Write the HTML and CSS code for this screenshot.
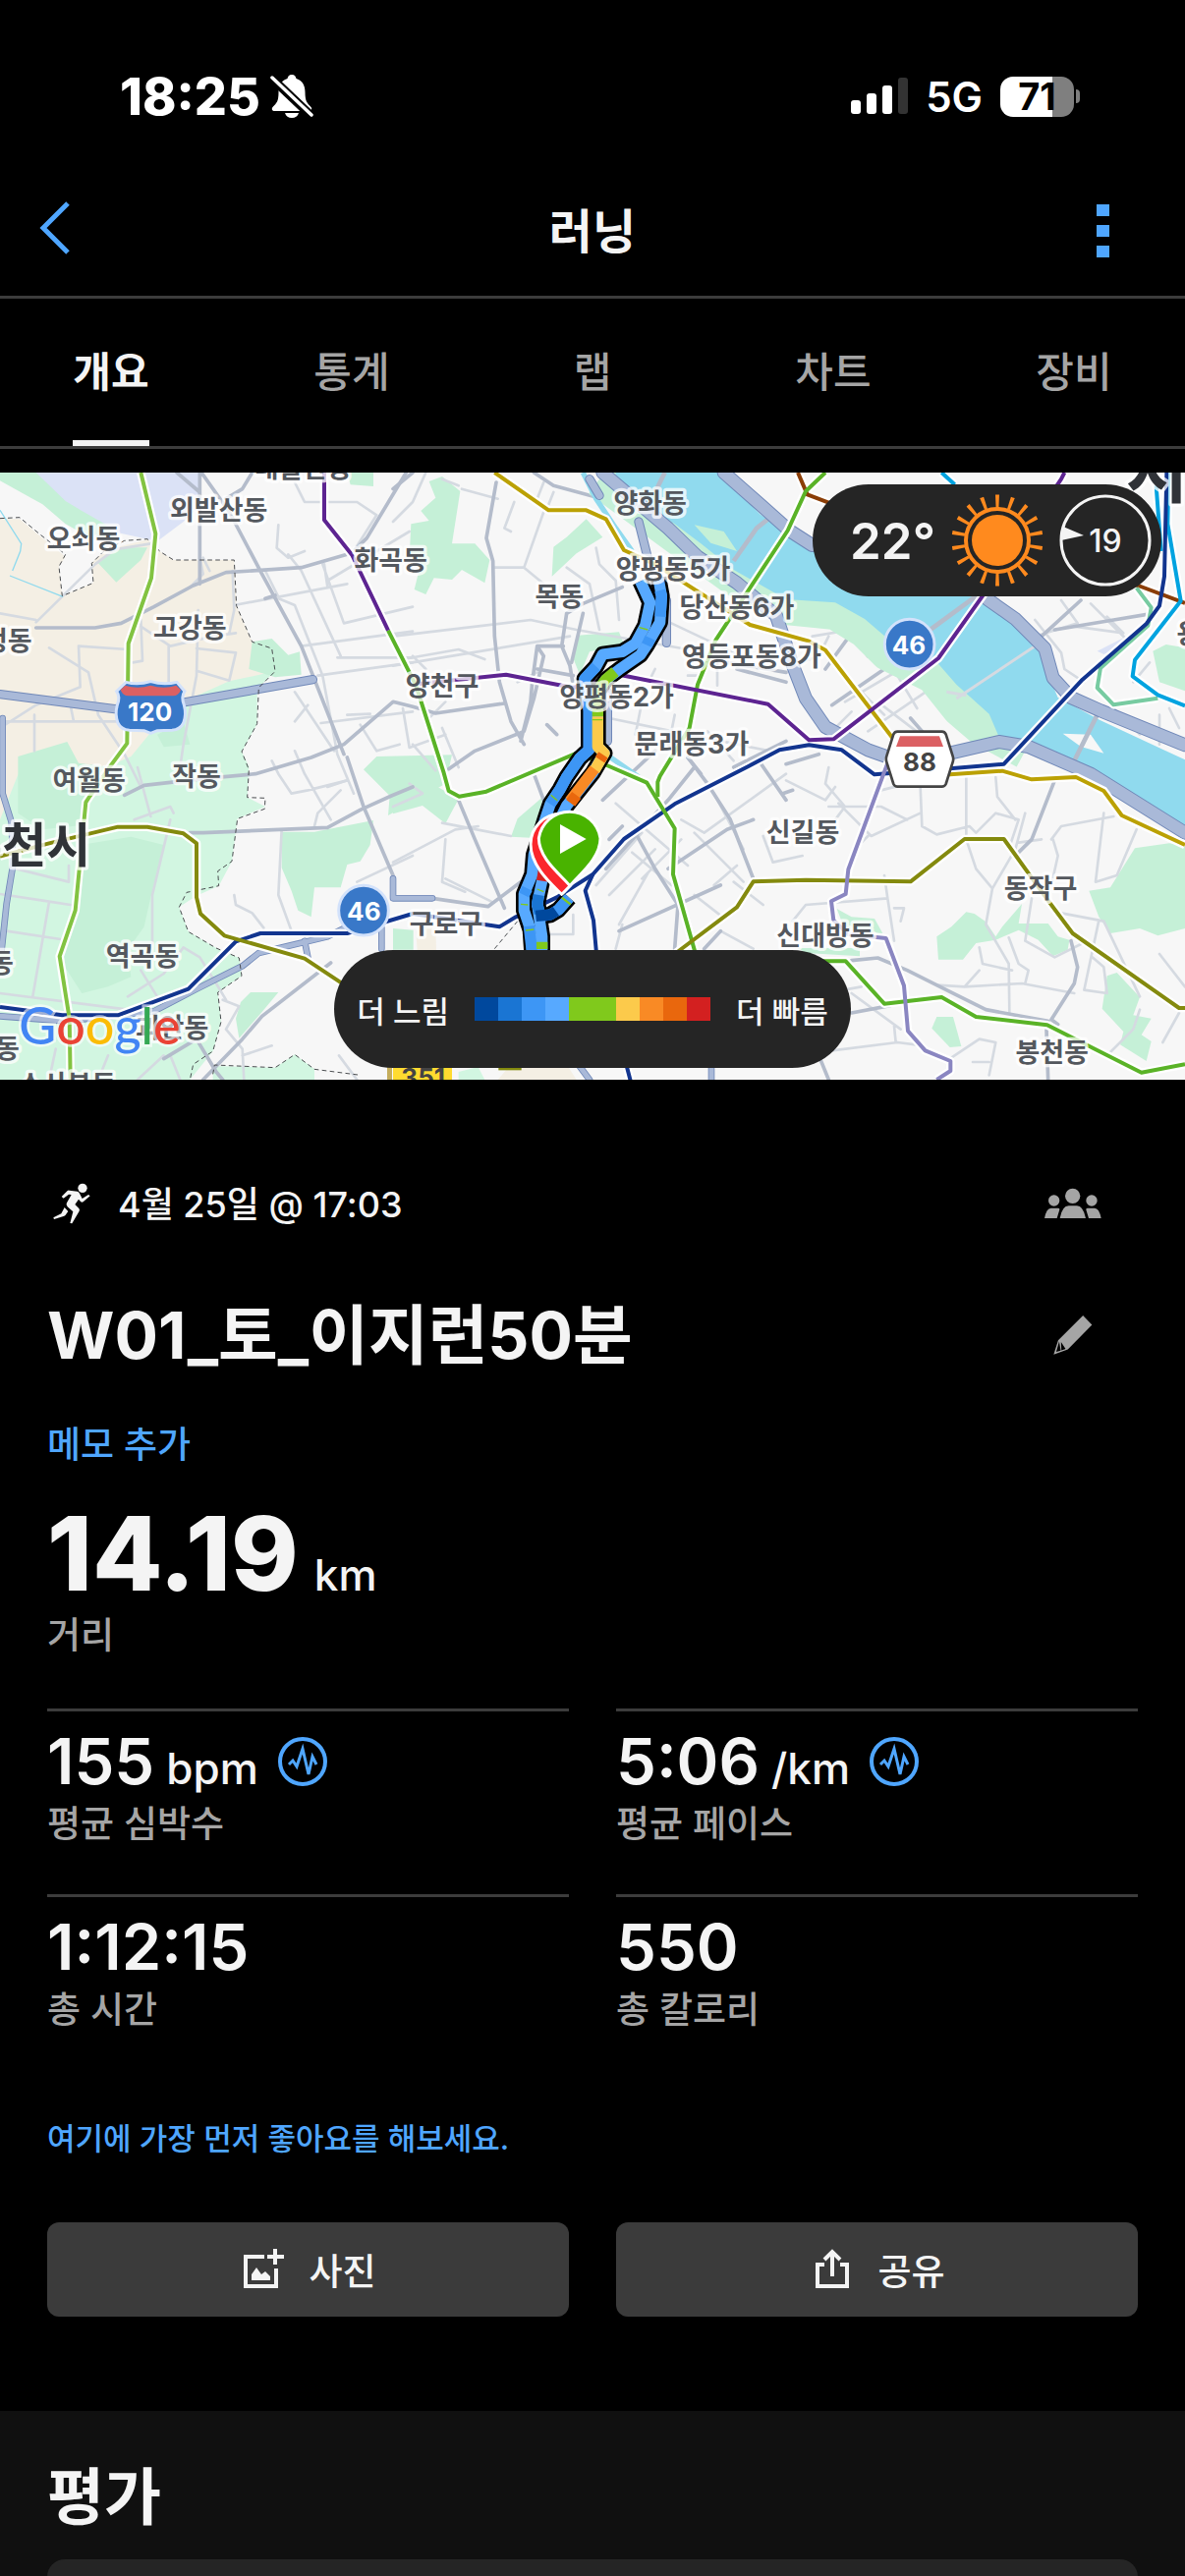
FILE: index.html
```html
<!DOCTYPE html>
<html lang="ko">
<head>
<meta charset="utf-8">
<meta name="viewport" content="width=device-width">
<title>러닝</title>
<link rel="stylesheet" href="styles.css">
</head>
<body>
<div class="status">
  <div class="status-left">
    <span class="clock">18:25</span>
    <svg class="bell" viewBox="0 0 44 46" aria-hidden="true">
      <path fill="#fff" d="M22 1c3 0 4 2 4.500 4 7 2 9 8 9 14 0 9 2 11 6 15 1.500 2 .5 4-2 4H4.500c-2.500 0-3.500-2-2-4 4-4 6-6 6-15 0-6 2-12 9-14C18 3 19 1 22 1zM15 40h14c-1 3.500-3.500 5-7 5s-6-1.500-7-5z"/>
      <path stroke="#000" stroke-width="9" d="M2 5l40 38"/>
      <path stroke="#fff" stroke-width="3.500" stroke-linecap="round" d="M2 4l40 38"/>
    </svg>
  </div>
  <div class="status-right">
    <svg class="signal" viewBox="0 0 58 38" aria-hidden="true">
      <rect x="0" y="23" width="10" height="14" rx="3" fill="#fff"/>
      <rect x="16" y="16" width="10" height="21" rx="3" fill="#fff"/>
      <rect x="32" y="8" width="10" height="29" rx="3" fill="#fff"/>
      <rect x="48" y="0" width="10" height="37" rx="3" fill="#333"/>
    </svg>
    <span class="network">5G</span>
    <span class="battery"><span class="battery-body">71</span><span class="battery-tip"></span></span>
  </div>
</div>

<header class="nav">
  <button class="icon-btn back" aria-label="뒤로">
    <svg width="32" height="54" viewBox="0 0 32 54"><path d="M29 2L4 27l25 25" fill="none" stroke="#4fa6ff" stroke-width="5"/></svg>
  </button>
  <h1 class="nav-title">러닝</h1>
  <button class="icon-btn more" aria-label="더보기">
    <svg width="13" height="54" viewBox="0 0 13 54" fill="#4fa6ff"><path d="M0 0h13v12H0zM0 21h13v12H0zM0 42h13v12H0z"/></svg>
  </button>
</header>

<nav class="tabs">
  <a href="#overview" class="tab active">개요</a>
  <a href="#stats" class="tab">통계</a>
  <a href="#laps" class="tab">랩</a>
  <a href="#charts" class="tab">차트</a>
  <a href="#gear" class="tab">장비</a>
</nav>

<div class="map" id="overview">
<svg class="map-svg" viewBox="0 0 3618 1854" preserveAspectRatio="xMidYMid slice">
  <defs>
    <path id="seohae" d="M430 0L475 187 462 322 392 522 388 827 340 892 275 987 262 1007 230 1337 182 1477 212 1667 215 1854"/>
    <path id="l5a" d="M990 0V145L1075 252 1185 482"/>
    <path id="l5b" d="M1280 645L1545 617 1750 657 1890 617 2345 707 2470 817 2545 814 2865 567 3000 377 3240 20 3250 0"/>
    <path id="l2a" d="M1185 482L1270 650 1355 917 1370 972 1402 989 1485 974 1760 857 1860 897 1975 947 2060 1087 2055 1227 2130 1492H2582L2700 1622 2875 1602 2980 1662 3197 1687 3485 1832 3618 1807"/>
    <path id="l2b" d="M2520 0L2460 57 2405 177 2185 512 2130 647 2105 780 2015 927 2008 945V990"/>
    <path id="l9" d="M1510 0L1675 115H1790L1850 142 1905 237 2000 280 2290 465 2470 515 2520 542 2730 817 2800 930 2900 922 3060 911 3150 937 3285 930 3370 972 3425 1047 3618 1137"/>
    <path id="l1" d="M0 1632L190 1657H360L575 1577 720 1432 795 1407H1060L1260 1347 1525 1387 1575 1357 1700 1297 1810 1227 1905 1119 2060 1012 2285 897 2380 847 2470 832 2570 847 2670 922 2900 904 3065 890 3305 632 3500 462 3540 407 3555 317 3562 0"/>
    <path id="l1b" d="M1810 1227L1787 1277 1812 1367 1820 1457 1925 1857"/>
    <path id="l7a" d="M0 1172L150 1132 360 1082H450L560 1102 600 1132V1297L612 1347 685 1414 930 1484 1060 1570"/>
    <path id="l7b" d="M2060 1470L2250 1327 2300 1249 2460 1244 2780 1249 2945 1119H3065L3200 1307 3275 1407 3600 1635H3618"/>
    <path id="sillim" d="M2720 860L2590 1212 2582 1287 2538 1309 2545 1367 2590 1410 2705 1422 2760 1567 2772 1705 2825 1765 2902 1797V1827L2860 1854"/>
    <path id="l6" d="M2436 0L2465 67 2530 92 3475 345 3618 399"/>
    <path id="arex" d="M2875 0L2915 37M3530 40L3545 240M3568 0L3565 157 3605 392 3465 572 3458 622 3535 679 3618 712"/>
    <path id="gj" d="M3470 352L3515 412 3505 467 3360 597 3350 657 3400 709 3535 689"/>
    <path id="west" d="M1955 332L1985 397 1970 467 1940 522 1900 547 1840 555 1820 592 1785 630 1798 727V847L1770 872 1730 930 1710 967 1680 1012 1665 1057 1630 1167 1625 1227 1600 1287V1337L1620 1397 1625 1470"/>
    <path id="east" d="M2010 322L2020 377 2015 457 1975 527 1955 557 1890 602 1850 632 1825 667V837L1845 857 1810 917 1730 1017 1670 1137 1655 1247 1640 1317 1655 1417V1470"/>
    <path id="spur" d="M1640 1317L1650 1355 1680 1350 1705 1335 1738 1298"/>
  </defs>

  <rect width="3618" height="1854" fill="#f7f7f7"/>
  <path fill="#dbe2f6" d="M90 0H612V100L560 150 480 210 300 170 200 90z"/>
  <path fill="#f4efe4" d="M0 142H60L120 192 200 257 180 287 190 377 285 337 280 277 320 237 450 205 490 242 530 267H715L722 407 770 517 830 537 840 607 600 800 0 1100zM1270 1400L1330 1370 1340 1854H1520L1600 1760H1700L1760 1854H1300z"/>
  <g fill="#d2f6e1">
    <path d="M840 607L700 637 560 700 490 757 400 867 330 897 60 910 0 1060V1854H580L650 1767 675 1677 665 1587 738 1537 730 1482 660 1452 575 1402 547 1327 600 1292 668 1262 708 1187 725 1057 810 1020 755 992 760 897 738 852 785 767 785 660z"/>
    <path d="M650 1854V1812L840 1817 900 1777 960 1822V1854z"/>
    <path d="M1400 1830L1460 1815 1480 1854H1400z"/>
  </g>
  <g fill="#c5f0d7">
    <path d="M0 0H110L200 87 250 117 320 157 350 197 290 207 200 157 130 97 0 25z"/>
    <path d="M300 277L360 229H450L430 267 355 335z"/>
    <path d="M55 867L205 822 240 887 340 900 255 997 250 1077 130 1090 55 1040z"/>
    <path d="M400 1112L500 1137 460 1297 440 1387 390 1457 400 1540 330 1570 250 1590 190 1497 230 1337 245 1137z"/>
    <path d="M480 800L560 760 580 830 500 838z"/>
    <path d="M770 517L830 507 880 557 915 547 920 617 840 625 760 600z"/>
    <path d="M1060 0H1140V42L1070 37zM1110 907L1150 867 1380 862 1360 950 1185 1047 1190 987z"/>
    <path d="M860 1097H960L1140 1062 1130 1137 1100 1187 1060 1197 1040 1267H960L950 1357 910 1337 890 1277 860 1207z"/>
    <path d="M735 1617L765 1587H850L800 1647 730 1727 720 1667z"/>
    <path d="M1310 27L1350 12 1405 57 1380 217H1450L1495 267 1480 337 1410 297 1380 327 1325 322 1300 372 1265 357 1285 277 1250 257 1255 157 1310 147 1285 117 1330 77z"/>
    <path d="M1690 227L1730 197 1790 142 1840 197 1760 247 1685 317z"/>
    <path d="M1765 497L1890 487 1905 525 1800 547 1770 617 1750 567z"/>
    <path d="M1200 897H1280V927L1400 997 1360 1072 1290 1017 1200 1042z"/>
    <path d="M1655 992L1650 1117 1560 1112 1580 1057zM1200 1392L1262 1397V1457H1200z"/>
    <path d="M2555 1332L2600 1357 2670 1362 2695 1407 2580 1397zM2435 1452H2625V1477L2460 1467z"/>
    <path d="M2860 1417L2905 1387 2950 1342 2975 1347 3010 1372 3040 1417 3060 1387 3120 1317 3110 1377H3200L3230 1417 3265 1427 3260 1457 3215 1477 3170 1427 3110 1397 3040 1427 2980 1437 2940 1487H2865z"/>
    <path d="M3465 1147L3570 1132 3618 1137V1392L3535 1414 3480 1392 3390 1407 3355 1357 3325 1277 3390 1267z"/>
    <path d="M3380 1537L3410 1527 3480 1602 3460 1657 3515 1667 3485 1717 3515 1737 3500 1797 3420 1747 3430 1707 3365 1637z"/>
    <path d="M2860 1662H2910L2935 1752 2900 1755 2845 1697z"/>
    <path d="M3520 545L3560 525 3618 535V667L3540 640z"/>
  </g>
  <path fill="#dbe2f6" d="M3350 545L3430 505 3450 520 3370 555z"/>

  <!-- local streets -->
  <g fill="none" stroke="#d5dae1" stroke-width="8" stroke-linecap="round" stroke-linejoin="round">
    <path d="M110 457L290 280 350 235 460 217M0 430L110 450M240 530L245 655 110 710 0 780M240 530L390 540M430 470L520 530 650 500 720 490M515 530V640M605 420L600 620 560 830 550 900M600 537L720 550 700 635 600 605M150 535L270 610 300 740 380 860 430 960M0 760H360M105 740V850M215 710L225 760M710 300L715 420 700 490M430 450L435 575 405 580M610 260L620 310 580 350M640 300L620 260"/>
    <path d="M715 405L1060 340M840 380L900 405 985 620 1030 860 1080 980M985 280L1050 460 1260 410M900 30L930 90H1090L1150 130 1080 240M850 160L845 230 880 260 930 240M1030 565H1260M920 530L1260 485M970 620L1260 580M810 300L850 380M1000 330L1250 180M980 765L1260 730M900 670L940 730 1020 850M830 880L850 920 890 980 940 970 1060 940M900 850L930 920 1010 1060M1060 740L1130 737M880 250L920 300 1040 560M990 280L1000 350M1100 770L1150 850 1220 830M900 760L940 710"/>
    <path d="M410 1060L520 1020 530 1040M420 900L460 1050M520 1060L465 1290V1440M0 1287L150 1310 215 1320M150 1310L100 1600M50 1210L210 1250V1200M20 1400L185 1425M0 1590L390 1640M390 1600L500 1530 560 1450 610 1480 660 1560 690 1610M430 1520L480 1600 530 1600M680 1610L730 1630 690 1700 740 1760 745 1854M860 1090L850 1290 890 1400 940 1400M715 1290L720 1320 770 1345 805 1390M1090 1250L1260 1170M500 1780L420 1854M520 1780L550 1854M1000 960L1060 940M960 1080L970 1040 1040 970M1035 1780L1090 1854M740 1780L830 1750M150 1854L170 1760M300 1854L330 1780"/>
    <path d="M1200 500L1620 450 1760 480 2100 540M1200 590L1740 500M1230 570L1400 540 1480 570M1300 0L1260 90 1200 150M1350 20L1400 40M1410 50L1520 80M1660 120L1600 290H1510M1570 90L1540 170 1560 180M1600 290L1660 340M1820 230L1830 280 1880 330 1890 450M1730 290L1800 340 1830 480M1230 720L1250 840 1360 800M1350 780L1400 900M1300 760L1360 700M1260 830L1330 910M1580 640L1640 610M2050 460L2240 550M1980 640L2000 600M2100 620H2150M1860 750L2100 800 2350 850M1960 700L1940 800M2060 740L2040 840M2160 790L2240 880M2190 560V650M1660 30L1640 80M1690 60L1670 110M1300 600L1260 560"/>
    <path d="M1200 1020L1290 980M1200 1190L1390 1090 1460 1080M1360 1120L1350 1250 1420 1280M1360 1240L1500 1310M1290 980L1250 950M1350 1070L1560 1110M1820 1260L1960 1100M1860 1290L2000 1150M1960 1240L2080 1120M1880 1010L2100 1200M2180 980L2270 1150M2080 1060L2150 1100 2400 920M2330 1110L2360 1190 2450 1170M2240 1250L2330 1320M1900 1380L1880 1454M1980 1220L1890 1380M2120 1100L2270 1250M2250 1200L2180 1260M2200 1400L2300 1454M1930 1160L2050 1260M2210 1360L2120 1290M2400 940L2520 1000 2550 960M1620 1410H1750V1350"/>
    <path d="M2480 500L2600 480 2720 540M2530 500L2500 560 2420 590M2580 700L2750 600M2620 660L2700 740M2680 700L2850 830M2740 620L2800 720M2650 790L2870 640M2600 730L2530 800M2900 680L2960 770 2970 820M3160 450L3240 550 3250 600 3310 640M3280 470L3430 490 3380 440M3240 390L3290 460 3160 500M3330 400L3440 510M3460 60L3500 250M3570 720L3600 780M3540 830V740M3400 720L3480 800M3460 640L3510 580"/>
    <path d="M2530 900L2520 950 2580 1020 2550 1060M2530 1020L2690 1020 2770 1060M2690 970L2810 940M2560 1010L2660 1110 2810 1040M2630 1130L2650 1110M2810 960L2815 1080 2860 1105 2960 1080 2980 1100M2950 930L2950 1120 2980 1210 3030 1270 3010 1380 3080 1500 3082 1650M3040 930L3045 990 3100 1060M2980 1100L3040 1040 3110 1060 3080 1150M3030 1270L3100 1150 3130 1040M3180 1120L3110 1130M3210 1120L3240 1080 3400 1050M3215 1120L3230 1170 3210 1260M3150 1300L3130 1430 3220 1480 3300 1440M3240 1345L3355 1367 3370 1370 3480 1600M3370 1040L3345 1250 3410 1230 3470 1090M3355 1367L3310 1580 3380 1590 3370 1510 3335 1480M2700 1230L2710 1300 2460 1320 2420 1370M2710 1300L2730 1430M2730 1330H2760L2750 1370M2945 1570L3120 1560 3280 1590M2990 1520L2945 1570 2860 1565M2990 1450L3000 1500 3090 1520M3080 1420L3110 1500 3140 1520 3130 1560M2540 1765L2740 1740 2820 1750M2600 1590L2750 1700M2730 1690L2735 1740M2900 1790L2990 1730 3040 1740 3020 1840M2970 1800H3020M3480 1640L3460 1700 3390 1770M3540 1470L3618 1570M3600 1650L3550 1740M2480 1597L2630 1570"/>
  </g>

  <!-- arterial roads -->
  <g fill="none" stroke="#b4bccb" stroke-width="11" stroke-linecap="round" stroke-linejoin="round">
    <path d="M110 474H290L370 460 470 410 590 345 690 305 920 290 1075 245 1120 200 1240 0M540 0L610 60M610 0V340M615 0L700 120 800 310 920 530 1050 860M690 80L740 50 770 0M840 375L810 385"/>
    <path d="M380 985L440 955 620 935 780 920 950 870 1050 830 1200 700 1260 715 1330 735 1540 705M580 1100H620L1000 1084 1100 1030 1195 987 1260 960M1060 870L1110 1020 1200 1230M620 1854L740 1730 800 1660 1010 1497M500 1790L600 1730 660 1830 680 1854"/>
    <path d="M1515 30L1485 200 1505 270 1510 500 1525 640 1560 760 1600 830M1630 0L1690 40 1820 75M1260 0L1200 50M1730 430L1780 400 1900 350M1730 430L1715 530 1740 590 1750 650M1780 430L1745 580M1370 905L1450 850 1600 790 1630 690 1660 560 1640 530 1625 640 1620 700 1590 820M1640 530H1720M1640 600L1750 620M1670 770L1700 800M2250 600L2400 640M2220 580L2400 610M2240 900L2400 820M2100 870L2140 920"/>
    <path d="M1630 920L1660 1000M1400 1000L1450 1120 1540 1330M1320 1300L1490 1325 1590 1250M1850 1210L2040 1000 2120 900M1840 1000L2000 850M1860 1120L1900 1080M2040 1210L2220 1090 2300 1060M1940 1100L2000 1210 2070 1320 2060 1454M2100 870L2160 950 2230 1060 2300 1240M2200 1400L2150 1454M2390 980L2420 970M2310 870L2400 1000M1890 1400L2200 1260"/>
    <path d="M2660 360L2600 490 2650 560M2600 490L2520 600M2540 710L2700 600M2780 750L2850 830M3080 350L3380 290M3220 480L3400 450 3520 430M3180 500L3300 390M3220 940L3150 1120 3110 1160M3270 1430L3290 1510 3280 1560 3210 1670 3230 1685M3195 1700L3200 1854M2600 1490L2680 1482 2770 1520 2900 1585 3010 1640 3200 1675M2600 1650L2720 1627M2400 890L2500 860M2500 1780L2530 1854"/>
  </g>

  <!-- river -->
  <path fill="none" stroke="#c5f0d7" stroke-width="110" stroke-linejoin="round" d="M1830 20L2060 190 2240 320 2400 410 2550 425 2640 480 2710 550 2850 620 2930 720 3000 780 3130 850"/>
  <path fill="#90daee" d="M1880 0H2200L2320 127 2460 222 2700 330 3010 382 3100 457 3180 537 3200 617 3230 687 3360 757 3618 877V1087L3300 897 3140 827 3050 807 3020 737 2920 647 2850 567 2710 507 2640 447 2550 397 2400 387 2240 297 2140 217 2060 157 1880 40z"/>
  <path fill="none" stroke="#90daee" stroke-width="16" d="M1780 0L1820 80 1880 170 1930 240M1850 860L1950 930"/>
  <path fill="#c5f0d7" d="M2120 160L2210 180 2250 240 2170 215z"/>
  <path fill="#f7f7f7" d="M3245 797L3330 800 3370 857 3300 837z"/>
  <path fill="none" stroke="#b4bccb" stroke-width="14" d="M2030 0L2000 60M2360 130L2310 170 2240 270M2840 480L2990 370M3350 740L3270 900"/>
  <path fill="none" stroke="#d5dae1" stroke-width="9" d="M2920 690L3190 510M2890 670L2950 680"/>

  <!-- expressways -->
  <g fill="none" stroke-linejoin="round" stroke-linecap="round">
    <g stroke="#7088b8">
      <path stroke-width="42" d="M1840 0L1930 77 2040 170 2130 257 2250 337 2370 437 2420 587 2460 690 2520 777 2650 847 2720 872 2900 857 3050 822 3140 837 3330 920 3618 1100M2210 0L2320 97 2410 177 2480 222M3015 387L3100 447 3190 537 3215 627 3270 687 3360 727 3618 832"/>
      <path stroke-width="28" d="M0 677L350 722 560 702 955 632M1800 20L1830 70M1950 150L1980 270M2035 390V520M1855 670V820"/>
      <path stroke-width="20" d="M8 750V980L35 1067 40 1197 20 1317 5 1457M0 1660L200 1675 470 1645 600 1577 740 1507 790 1467 1000 1417 1100 1367M930 1430L940 1480M1200 1240V1300L1320 1300M1165 1390V1454M1760 1800L1800 1854M2172 1820V1854"/>
    </g>
    <g stroke="#a9b9d8">
      <path stroke-width="36" d="M1840 0L1930 77 2040 170 2130 257 2250 337 2370 437 2420 587 2460 690 2520 777 2650 847 2720 872 2900 857 3050 822 3140 837 3330 920 3618 1100M2210 0L2320 97 2410 177 2480 222M3015 387L3100 447 3190 537 3215 627 3270 687 3360 727 3618 832"/>
      <path stroke-width="22" d="M0 677L350 722 560 702 955 632M1800 20L1830 70M1950 150L1980 270M2035 390V520M1855 670V820"/>
      <path stroke-width="15" d="M8 750V980L35 1067 40 1197 20 1317 5 1457M0 1660L200 1675 470 1645 600 1577 740 1507 790 1467 1000 1417 1100 1367M930 1430L940 1480M1200 1240V1300L1320 1300M1165 1390V1454M1760 1800L1800 1854M2172 1820V1854"/>
    </g>
  </g>

  <path fill="none" stroke="#90daee" stroke-width="4" d="M0 115L65 217 62 240 38 300M30 315L192 379"/>
  <path fill="none" stroke="#4a4d50" stroke-width="3" stroke-dasharray="14 10" d="M0 140L60 137 120 187 200 250 180 287 190 377 285 337 280 277 320 237 380 208 450 203 490 242 530 267H715L722 407 770 517 830 537 840 607 790 657 785 767 738 852 760 907 755 992 810 994 808 1027 725 1057 708 1187 665 1217 668 1262 570 1282 547 1327 575 1402 660 1452 730 1482 738 1537 665 1587 675 1677 650 1767 590 1807 580 1854M650 1837L655 1809 840 1817 900 1777 960 1822 1100 1840M1510 1454L1580 1370"/>

  <!-- rail lines: white casing, then line colour -->
  <g fill="none" stroke="#fff" stroke-width="26" stroke-linejoin="round">
    <use href="#seohae"/><use href="#l5a"/><use href="#l5b"/><use href="#l2a"/><use href="#l2b"/><use href="#l9"/><use href="#l1"/><use href="#l1b"/><use href="#l7a"/><use href="#l7b"/><use href="#sillim"/><use href="#l6"/><use href="#arex"/><use href="#gj"/>
  </g>
  <g fill="none" stroke-width="12" stroke-linejoin="round">
    <use href="#l6" stroke="#8a3d06"/>
    <use href="#gj" stroke="#77cba1"/>
    <use href="#arex" stroke="#00a3e0"/>
    <use href="#l9" stroke="#bba104"/>
    <use href="#l1" stroke="#12358f"/>
    <use href="#l1b" stroke="#12358f"/>
    <use href="#seohae" stroke="#82c341"/>
    <use href="#l2a" stroke="#5ab327"/>
    <use href="#l2b" stroke="#5ab327"/>
    <use href="#l5a" stroke="#5d2491"/>
    <use href="#l5b" stroke="#5d2491"/>
    <use href="#l7a" stroke="#848a0e"/>
    <use href="#l7b" stroke="#848a0e"/>
    <use href="#sillim" stroke="#8a86c1"/>
  </g>

  <!-- recorded track -->
  <g fill="none" stroke-linejoin="round">
    <g stroke="#000" stroke-width="50"><use href="#west"/><use href="#east"/><use href="#spur"/></g>
    <g stroke="#57a9ff" stroke-width="34"><use href="#east"/><use href="#west"/><use href="#spur"/></g>
    <g stroke-width="34">
      <path stroke="#3d96f5" d="M1820 592L1785 630 1798 727V847L1770 872 1730 930 1710 967 1680 1012M2015 360L2020 377 2016 440M1975 527L1985 505M1610 1270L1600 1290M1615 1385L1625 1470"/>
      <path stroke="#80c91c" d="M1878 608L1850 632 1825 667V745"/>
      <path stroke="#fcca4b" d="M1825 745V837L1845 857 1815 910"/>
      <path stroke="#f98a25" d="M1815 905L1740 1003"/>
      <path stroke="#e9670d" d="M1760 985L1742 1009M1842 862L1832 877"/>
      <path stroke="#d32020" d="M1660 1215L1655 1247"/>
      <path stroke="#1a75d3" d="M1645 1290L1640 1317 1648 1345"/>
      <path stroke="#00489d" d="M1636 1354L1680 1350 1700 1338"/>
      <path stroke="#3d96f5" d="M1698 1340L1705 1335 1736 1300"/>
      <path stroke="#80c91c" d="M1655 1433V1455M1727 1311L1731 1306"/>
    </g>
    <path stroke="#80c91c" stroke-width="4" d="M1952 473L1978 480M1808 755H1840M1682 985L1702 1002M1590 1318L1612 1320M1605 1398L1630 1395M1640 1272L1660 1280"/>
  </g>
  <g stroke="#fff" stroke-width="9" stroke-linejoin="round">
    <path fill="#fb262c" d="M1715 1288C1690 1262 1620 1205 1620 1135A93 93 0 0 1 1806 1135C1806 1205 1740 1262 1715 1288z"/>
    <path fill="#49b300" d="M1740 1262C1715 1230 1645 1180 1645 1117A95 95 0 0 1 1833 1117C1833 1180 1765 1230 1740 1262z"/>
  </g>
  <path fill="#fff" d="M1710 1074V1164L1790 1119z"/>

  <!-- road shields -->
  <path fill="#3978c8" stroke="#d3e2fb" stroke-width="9" d="M385 640Q420 650 460 638 500 650 540 640L564 668Q552 685 562 710 570 740 560 765 550 785 525 787L480 788 460 796 440 788 395 787Q370 785 360 765 350 740 358 710 368 685 356 668z"/>
  <path fill="#db6063" d="M382 650Q420 662 460 650 500 662 538 650L552 664Q545 682 528 682H392Q375 682 368 664z"/>
  <g fill="#3978c8" stroke="#d3e2fb" stroke-width="9"><circle cx="2777" cy="524" r="76"/><circle cx="1110" cy="1337" r="76"/></g>
  <path fill="#fff" stroke="#444" stroke-width="8" stroke-linejoin="round" d="M2740 791H2876Q2884 791 2888 799L2909 866Q2912 875 2909 884L2888 951Q2884 959 2876 959H2740Q2732 959 2728 951L2707 884Q2704 875 2707 866L2728 799Q2732 791 2740 791z"/>
  <path fill="#db6063" d="M2748 805H2868L2880 837H2736z"/>
  <rect x="1182" y="1810" width="15" height="44" fill="#c4ad5c"/>
  <rect x="1200" y="1780" width="180" height="74" fill="#ffdb30"/>
  <path stroke="#848a0e" stroke-width="14" d="M1522 1818H1592"/>
  <g class="shield-text">
    <text x="458" y="758" fill="#fff">120</text>
    <text x="2775" y="555" fill="#fff">46</text>
    <text x="1111" y="1367" fill="#fff">46</text>
    <text x="2808" y="912" fill="#444">88</text>
    <text x="1292" y="1875" fill="#444">351</text>
  </g>

  <g class="place">
    <text x="668" y="145">외발산동</text><text x="255" y="231">오쇠동</text><text x="925" y="16">내발산동</text>
    <text x="1193" y="296">화곡동</text><text x="580" y="505">고강동</text><text x="-14" y="544">오정동</text>
    <text x="272" y="968">여월동</text><text x="600" y="957">작동</text><text x="435" y="1505">역곡동</text>
    <text x="-70" y="1527">심곡동</text><text x="-52" y="1787">송내동</text><text x="525" y="1725">괴안동</text><text x="205" y="1900">소사본동</text>
    <text x="1985" y="122">양화동</text><text x="2055" y="325">양평동5가</text><text x="1708" y="407">목동</text>
    <text x="2250" y="440">당산동6가</text><text x="2295" y="590">영등포동8가</text><text x="1350" y="680">양천구</text>
    <text x="1883" y="714">양평동2가</text><text x="2112" y="857">문래동3가</text><text x="1362" y="1407">구로구</text>
    <text x="2451" y="1128">신길동</text><text x="2520" y="1444">신대방동</text><text x="3177" y="1299">동작구</text>
    <text x="3212" y="1799">봉천동</text><text x="3704" y="522">용산구</text>
  </g>
  <g class="city"><text x="74" y="1190" font-size="147">부천시</text><text x="3532" y="74" font-size="204">서</text></g>
  <text class="logo" x="58" y="1745"><tspan fill="#4285f4">G</tspan><tspan fill="#ea4335">o</tspan><tspan fill="#fbbc05">o</tspan><tspan fill="#4285f4">g</tspan><tspan fill="#34a853">l</tspan><tspan fill="#ea4335">e</tspan></text>
</svg>

  <div class="weather">
    <span class="temp">22°</span>
    <svg width="94" height="94" viewBox="-47 -47 94 94" role="img" aria-label="맑음">
      <circle r="26" fill="#ff8a1e"/>
      <circle r="32" fill="none" stroke="#ff8a1e" stroke-width="4"/>
      <circle r="40" fill="none" stroke="#ff8a1e" stroke-width="13" pathLength="180" stroke-dasharray="2.500 7.500" stroke-dashoffset="1.250" transform="rotate(-90)"/>
    </svg>
    <div class="wind">
      <svg class="wind-ring" viewBox="-47 -47 94 94" aria-hidden="true">
        <circle r="45" fill="none" stroke="#f4f4f4" stroke-width="3"/>
        <path d="M-43 -14L-22 -5-45 0z" fill="#f4f4f4"/>
      </svg>
      <span>19</span>
    </div>
  </div>

  <div class="legend">
    <span>더 느림</span>
    <span class="scale"><i class="c1"></i><i class="c2"></i><i class="c3"></i><i class="c4"></i><i class="c5"></i><i class="c5"></i><i class="c6"></i><i class="c7"></i><i class="c8"></i><i class="c9"></i></span>
    <span>더 빠름</span>
  </div>
</div>

<main class="content">
  <div class="meta">
    <svg class="runner" viewBox="0 0 114 124" fill="#f4f4f4" aria-hidden="true">
      <circle cx="90" cy="15" r="14"/>
      <path d="M26 41L44 23Q46 21 50 22L74 25Q79 26 81 31L89 47 108 35 113 39 92 57Q88 60 84 56L78 49 67 65 79 77Q82 80 80 85L58 123 52 122 61 87 44 72Q38 66 42 60L56 35 48 34 32 46z"/>
      <path d="M35 74L46 86 38 97Q36 100 32 101L3 110 1 105 25 93 33 78z"/>
    </svg>
    <span class="date">4월 25일 @ 17:03</span>
    <button class="icon-btn side" aria-label="공개 범위">
      <svg width="58" height="32" viewBox="0 0 174 92" fill="#a5a5a5"><circle cx="86" cy="23" r="23"/><circle cx="29" cy="37" r="17"/><circle cx="144" cy="37" r="17"/><path d="M47 91Q54 53 74 53H99Q118 53 126 91zM0 91Q6 60 20 60H42Q47 60 46 65L38 91zM173 91Q167 60 153 60H131Q126 60 127 65L135 91z"/></svg>
    </button>
  </div>
  <div class="title-row">
    <h2 class="title">W01_토_이지런50분</h2>
    <button class="icon-btn side" aria-label="이름 편집">
      <svg width="40" height="40" viewBox="0 0 120 122" fill="#a5a5a5"><path fill-rule="evenodd" d="M91 0L119 29 44 105 0 121 14 77zM17 81L8 113 22 109zM23 82L24 108 37 104z"/></svg>
    </button>
  </div>
  <a class="memo" href="#memo">메모 추가</a>
  <p class="big">14.19<small>km</small></p>
  <p class="label">거리</p>

  <div class="stats" id="stats">
    <div class="stat">
      <p class="value">155 <small>bpm</small>
        <svg class="pulse" viewBox="0 0 50 50" role="img" aria-label="심박수 차트"><circle cx="25" cy="25" r="23" fill="none" stroke="#4fa6ff" stroke-width="4"/><path d="M11 28l4-4 4 6 6-18 6 26 4-18 4 8" fill="none" stroke="#4fa6ff" stroke-width="3"/></svg></p>
      <p class="label">평균 심박수</p>
    </div>
    <div class="stat">
      <p class="value">5:06 <small>/km</small>
        <svg class="pulse" viewBox="0 0 50 50" role="img" aria-label="페이스 차트"><circle cx="25" cy="25" r="23" fill="none" stroke="#4fa6ff" stroke-width="4"/><path d="M11 28l4-4 4 6 6-18 6 26 4-18 4 8" fill="none" stroke="#4fa6ff" stroke-width="3"/></svg></p>
      <p class="label">평균 페이스</p>
    </div>
    <div class="stat"><p class="value">1:12:15</p><p class="label">총 시간</p></div>
    <div class="stat"><p class="value">550</p><p class="label">총 칼로리</p></div>
  </div>

  <a class="like" href="#like">여기에 가장 먼저 좋아요를 해보세요.</a>

  <div class="actions">
    <button class="action">
      <svg width="48" height="42" viewBox="-4 0 48 42" fill="none" stroke="#f4f4f4" stroke-width="4" aria-hidden="true"><path d="M21 8H2v30h31V20M32 0v16M24 8h17"/><path d="M8 32V26l5-7 5 7 4-3 5 5v4z" fill="#f4f4f4" stroke="none"/></svg>
      <span>사진</span>
    </button>
    <button class="action">
      <svg width="48" height="42" viewBox="-7 0 48 42" fill="none" stroke="#f4f4f4" stroke-width="4" aria-hidden="true"><path d="M9 16H2v22h30V16h-7M17 28V4M9 11l8-8 8 8"/></svg>
      <span>공유</span>
    </button>
  </div>
</main>

<section class="review">
  <h2 class="review-title">평가</h2>
  <div class="card"></div>
</section>
</body>
</html>
```
FILE: styles.css
```css
* { box-sizing: border-box; }
body {
  margin: 0;
  min-height: 100vh;
  display: flex;
  flex-direction: column;
  background: #000;
  color: #f4f4f4;
  font-family: Inter, "Noto Sans CJK KR", sans-serif;
  font-weight: 500;
}
h1, h2, p { margin: 0; }
a { text-decoration: none; }
button {
  font: inherit;
  color: inherit;
  border: 0;
  padding: 0;
  background: none;
}
svg { display: block; flex: none; }

.status {
  display: flex;
  justify-content: space-between;
  align-items: center;
  height: 162px;
  padding: 34px 107px 0 122px;
  color: #fff;
}
.status-left { display: flex; align-items: center; gap: 10px; }
.clock { font-size: 52px; font-weight: 800; }
.bell { width: 44px; height: 46px; }
.status-right { display: flex; align-items: center; gap: 18px; }
.signal { width: 58px; height: 38px; }
.network { font-size: 42px; font-weight: 600; }
.battery { display: flex; align-items: center; gap: 2px; }
.battery-body {
  width: 75px;
  height: 41px;
  border-radius: 13px;
  background: linear-gradient(90deg, #fff 71%, #7f7f7f 71%);
  color: #000;
  font-size: 38px;
  font-weight: 700;
  line-height: 41px;
  text-align: center;
}
.battery-tip { width: 4px; height: 14px; border-radius: 0 4px 4px 0; background: #7f7f7f; }

.nav {
  display: flex;
  align-items: center;
  justify-content: space-between;
  height: 142px;
  padding: 0 76px 0 40px;
  border-bottom: 3px solid #3c3c3c;
}
.icon-btn { display: flex; align-items: center; justify-content: center; }
.nav-title { font-size: 48px; font-weight: 700; }
.nav .icon-btn { height: 80px; }
.nav .back { width: 50px; justify-content: flex-start; }
.nav .more { width: 14px; padding-top: 6px; }

.tabs {
  display: flex;
  justify-content: space-between;
  padding: 0 74px;
  border-bottom: 3px solid #3c3c3c;
  margin-bottom: 24px;
}
.tab {
  width: 78px;
  height: 150px;
  line-height: 150px;
  border-bottom: 6px solid transparent;
  color: #a5a5a5;
  font-size: 42px;
  text-align: center;
}
.tab.active { color: #f4f4f4; border-color: #f4f4f4; font-weight: 700; }

.map { position: relative; aspect-ratio: 1206 / 618; }
.map-svg { width: 100%; height: 100%; }
.place text, .city text {
  font-family: Inter, "Noto Sans CJK KR", sans-serif;
  font-weight: 700;
  text-anchor: middle;
  stroke: #fff;
  stroke-opacity: .75;
  stroke-width: 20px;
  stroke-linejoin: round;
  paint-order: stroke;
}
.place text { font-size: 81px; fill: #54585e; }
.city text { fill: #303338; }
.shield-text { font-family: Inter, sans-serif; font-weight: 700; font-size: 78px; text-anchor: middle; }
.logo {
  font-family: Lato, sans-serif;
  font-size: 156px;
  font-weight: 500;
  stroke: #fff;
  stroke-opacity: .6;
  stroke-width: 16px;
  paint-order: stroke;
}

.weather {
  position: absolute;
  top: 12px;
  right: 24px;
  display: flex;
  align-items: center;
  justify-content: flex-end;
  gap: 16px;
  width: 355px;
  height: 114px;
  padding-right: 10px;
  border-radius: 57px;
  background: #252525;
}
.temp { font-size: 51px; font-weight: 600; }
.wind {
  position: relative;
  display: flex;
  align-items: center;
  justify-content: center;
  width: 94px;
  height: 94px;
  font-size: 32px;
}
.wind-ring { position: absolute; inset: 0; }

.legend {
  position: absolute;
  bottom: 12px;
  left: 50%;
  transform: translateX(-50%);
  display: flex;
  align-items: center;
  justify-content: center;
  gap: 26px;
  width: 526px;
  height: 120px;
  border-radius: 60px;
  background: #252525;
  font-size: 31px;
  white-space: nowrap;
}
.scale { display: flex; }
.scale i { width: 24px; height: 24px; }
.c1 { background: #00489d; }
.c2 { background: #1a75d3; }
.c3 { background: #3d96f5; }
.c4 { background: #57a9ff; }
.c5 { background: #80c91c; }
.c6 { background: #fcca4b; }
.c7 { background: #f98a25; }
.c8 { background: #e9670d; }
.c9 { background: #d32020; }

.content { display: flex; flex-direction: column; padding: 96px 48px; }
.meta { display: flex; align-items: center; height: 60px; }
.runner { width: 38px; height: 42px; margin: 0 28px 0 6px; }
.date { padding-bottom: 4px; font-size: 36px; }
.side { width: 60px; height: 60px; margin: 0 36px 0 auto; }
.title-row { display: flex; align-items: center; height: 80px; margin-top: 64px; }
.title { font-size: 66px; font-weight: 700; line-height: 80px; }
.memo { margin-top: 48px; font-size: 37px; line-height: 48px; color: #4fa6ff; }
.big {
  display: flex;
  align-items: baseline;
  gap: 16px;
  margin-top: 30px;
  font-size: 104px;
  font-weight: 800;
  line-height: 112px;
}
small { font-size: 44px; font-weight: 500; line-height: 48px; }
.label { margin-top: 4px; font-size: 37px; line-height: 48px; color: #a5a5a5; }
.stats { display: grid; grid-template-columns: 1fr 1fr; column-gap: 48px; margin-top: 50px; }
.stat { padding: 15px 0 47px; border-top: 3px solid #3c3c3c; }
.value { display: flex; align-items: baseline; gap: 12px; font-size: 65px; font-weight: 600; line-height: 72px; }
.pulse { width: 50px; height: 50px; margin-left: 8px; align-self: center; }
.like { margin-top: 40px; font-size: 31px; line-height: 40px; color: #4fa6ff; }
.actions { display: grid; grid-template-columns: 1fr 1fr; gap: 48px; margin-top: 65px; }
.action {
  display: flex;
  align-items: center;
  justify-content: center;
  gap: 22px;
  height: 96px;
  border-radius: 12px;
  background: #3b3b3b;
  font-size: 37px;
}

.review {
  flex: 1;
  display: flex;
  flex-direction: column;
  padding: 47px 48px 0;
  background: #101010;
}
.review-title { font-size: 63px; font-weight: 700; line-height: 80px; }
.card { flex: 1; min-height: 18px; margin-top: 24px; border-radius: 24px 24px 0 0; background: #252525; }
```
